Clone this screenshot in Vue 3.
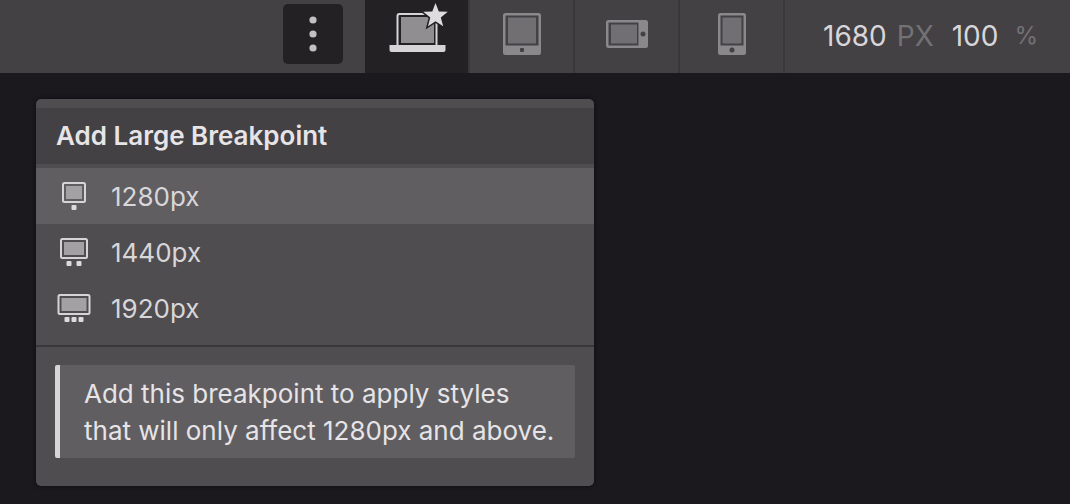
<script setup>
import { ref } from 'vue'

const devices = [
  { id: 'desktop', label: 'Desktop' },
  { id: 'tablet', label: 'Tablet' },
  { id: 'landscape', label: 'Mobile landscape' },
  { id: 'portrait', label: 'Mobile portrait' },
]
const activeDevice = ref('desktop')

const breakpoints = [
  { size: 1280, frame: 22, dots: [15] },
  { size: 1440, frame: 26, dots: [10, 20] },
  { size: 1920, frame: 31, dots: [8, 15, 22] },
]
const selected = ref(1280)
</script>

<template>
  <div class="designer">
    <header class="toolbar">
      <button class="more" type="button" aria-label="Add breakpoint">
        <svg width="10" height="36" viewBox="0 0 10 36" fill="#c2c0c3">
          <circle cx="5" cy="4" r="3.6" />
          <circle cx="5" cy="18" r="3.6" />
          <circle cx="5" cy="32" r="3.6" />
        </svg>
      </button>
      <nav class="devices" aria-label="Breakpoints">
        <button
          v-for="device in devices"
          :key="device.id"
          type="button"
          class="device"
          :class="{ active: activeDevice === device.id }"
          :aria-label="device.label"
          @click="activeDevice = device.id"
        >
          <svg v-if="device.id === 'desktop'" width="60" height="60" viewBox="0 -2 60 60">
            <path d="M10.500 39V10a2 2 0 0 1 2-2h35a2 2 0 0 1 2 2v29" fill="none" stroke="#d6d4d7" stroke-width="2" />
            <path d="M14 11h33v26H14z" fill="#908e91" />
            <path d="M2.500 39h56v5a2 2 0 0 1-2 2h-52a2 2 0 0 1-2-2z" fill="#d6d4d7" />
            <path
              d="M48.500-3l3.300 8.400 9 .4-7 5.700 2.400 8.700-7.700-4.900-7.500 4.900 2.300-8.700-7-5.700 9-.4z"
              fill="#dedcdf"
              stroke="#232124"
              stroke-width="3"
              paint-order="stroke"
            />
          </svg>
          <svg v-else-if="device.id === 'tablet'" width="38" height="42" viewBox="0 0 38 42">
            <rect width="38" height="42" rx="2.500" fill="#8a888b" />
            <path d="M2.500 2.500h33v30h-33z" fill="#434144" />
            <path d="M5 4.500h28v26H5z" fill="#716f72" />
            <rect x="17" y="35" width="4" height="4" rx="1" fill="#434144" />
          </svg>
          <svg v-else-if="device.id === 'landscape'" width="42" height="28" viewBox="0 0 42 28">
            <rect width="42" height="28" rx="2.500" fill="#8a888b" />
            <path d="M2.500 2.500h30v23h-30z" fill="#434144" />
            <path d="M5 4.500h26v19H5z" fill="#716f72" />
            <circle cx="37" cy="14" r="2.500" fill="#434144" />
          </svg>
          <svg v-else width="28" height="42" viewBox="0 0 28 42">
            <rect width="28" height="42" rx="2.500" fill="#8a888b" />
            <path d="M2.500 2.500h23v30h-23z" fill="#434144" />
            <path d="M4.500 4.500h19v26h-19z" fill="#716f72" />
            <circle cx="14" cy="37" r="2.500" fill="#434144" />
          </svg>
        </button>
      </nav>
      <div class="metrics">
        <span class="value">1680</span><span class="unit">PX</span>
        <span class="value zoom">100</span><span class="unit percent">%</span>
      </div>
    </header>

    <main class="canvas">
      <section class="popover">
        <h2 class="title">Add Large Breakpoint</h2>
        <div class="list">
          <button
            v-for="bp in breakpoints"
            :key="bp.size"
            type="button"
            class="option"
            :class="{ selected: selected === bp.size }"
            @click="selected = bp.size"
          >
            <svg width="34" height="28" viewBox="-2 0 34 28">
              <rect
                :x="15 - bp.frame / 2"
                y="1"
                :width="bp.frame"
                height="19"
                rx="1.500"
                fill="none"
                stroke="#d6d4d7"
                stroke-width="2"
              />
              <rect :x="18 - bp.frame / 2" y="4" :width="bp.frame - 6" height="13" fill="#a3a1a4" />
              <rect v-for="x in bp.dots" :key="x" :x="x - 2.5" y="23" width="5" height="5" rx="1" fill="#dcdadd" />
            </svg>
            <span>{{ bp.size }}px</span>
          </button>
        </div>
        <div class="info">
          <p class="note">Add this breakpoint to apply styles that will only affect {{ selected }}px and above.</p>
        </div>
      </section>
    </main>
  </div>
</template>

<style>
body {
  background: #1b191e;
}
</style>

<style scoped>
.designer {
  min-height: 100vh;
  background: #1b191e;
  color: #d8d6d9;
  font-family: Inter, "Liberation Sans", sans-serif;
  font-size: 26px;
}

button {
  margin: 0;
  padding: 0;
  border: 0;
  color: inherit;
  font: inherit;
  cursor: pointer;
}

svg {
  display: block;
  flex: none;
  overflow: visible;
}

.toolbar {
  display: flex;
  justify-content: flex-end;
  height: 73px;
  background: #434144;
}

.more {
  display: flex;
  align-items: center;
  justify-content: center;
  width: 60px;
  height: 60px;
  margin: 4px 22px 0 0;
  border-radius: 5px;
  background: #232124;
}

.devices {
  display: flex;
}

.device {
  box-sizing: border-box;
  display: flex;
  align-items: center;
  justify-content: center;
  width: 105px;
  padding-bottom: 5px;
  border-right: 2px solid #39373a;
  background: #434144;
}

.device.active {
  background: #232124;
}

.metrics {
  box-sizing: border-box;
  display: flex;
  align-items: center;
  width: 285px;
  padding: 0 32px 2px 38px;
  font-size: 28px;
  white-space: nowrap;
}

.unit {
  margin-left: 10px;
  color: #737174;
}

.zoom {
  margin-left: 18px;
}

.percent {
  margin-left: auto;
  font-size: 24px;
}

.canvas {
  padding: 26px 36px 16px;
}

.popover {
  max-width: 558px;
  overflow: hidden;
  border-radius: 5px;
  background: #4f4d50;
  box-shadow: 0 0 4px #0e0c10;
}

.title {
  margin: 9px 0 4px;
  padding: 0 20px;
  background: #434144;
  color: #e6e4e7;
  font-size: 26px;
  font-weight: 600;
  line-height: 56px;
}

.list {
  padding-bottom: 9px;
  border-bottom: 2px solid #39373a;
}

.option {
  display: flex;
  align-items: center;
  gap: 20px;
  width: 100%;
  height: 56px;
  padding: 0 21px;
  background: transparent;
  text-align: left;
}

.option.selected {
  background: #605e61;
}

.info {
  padding: 18px 19px 28px;
}

.note {
  margin: 0;
  padding: 10px 16px 9px 24px;
  border-left: 5px solid #d6d4d7;
  border-radius: 2px;
  background: #605e61;
  color: #e6e4e7;
  line-height: 37px;
}
</style>
